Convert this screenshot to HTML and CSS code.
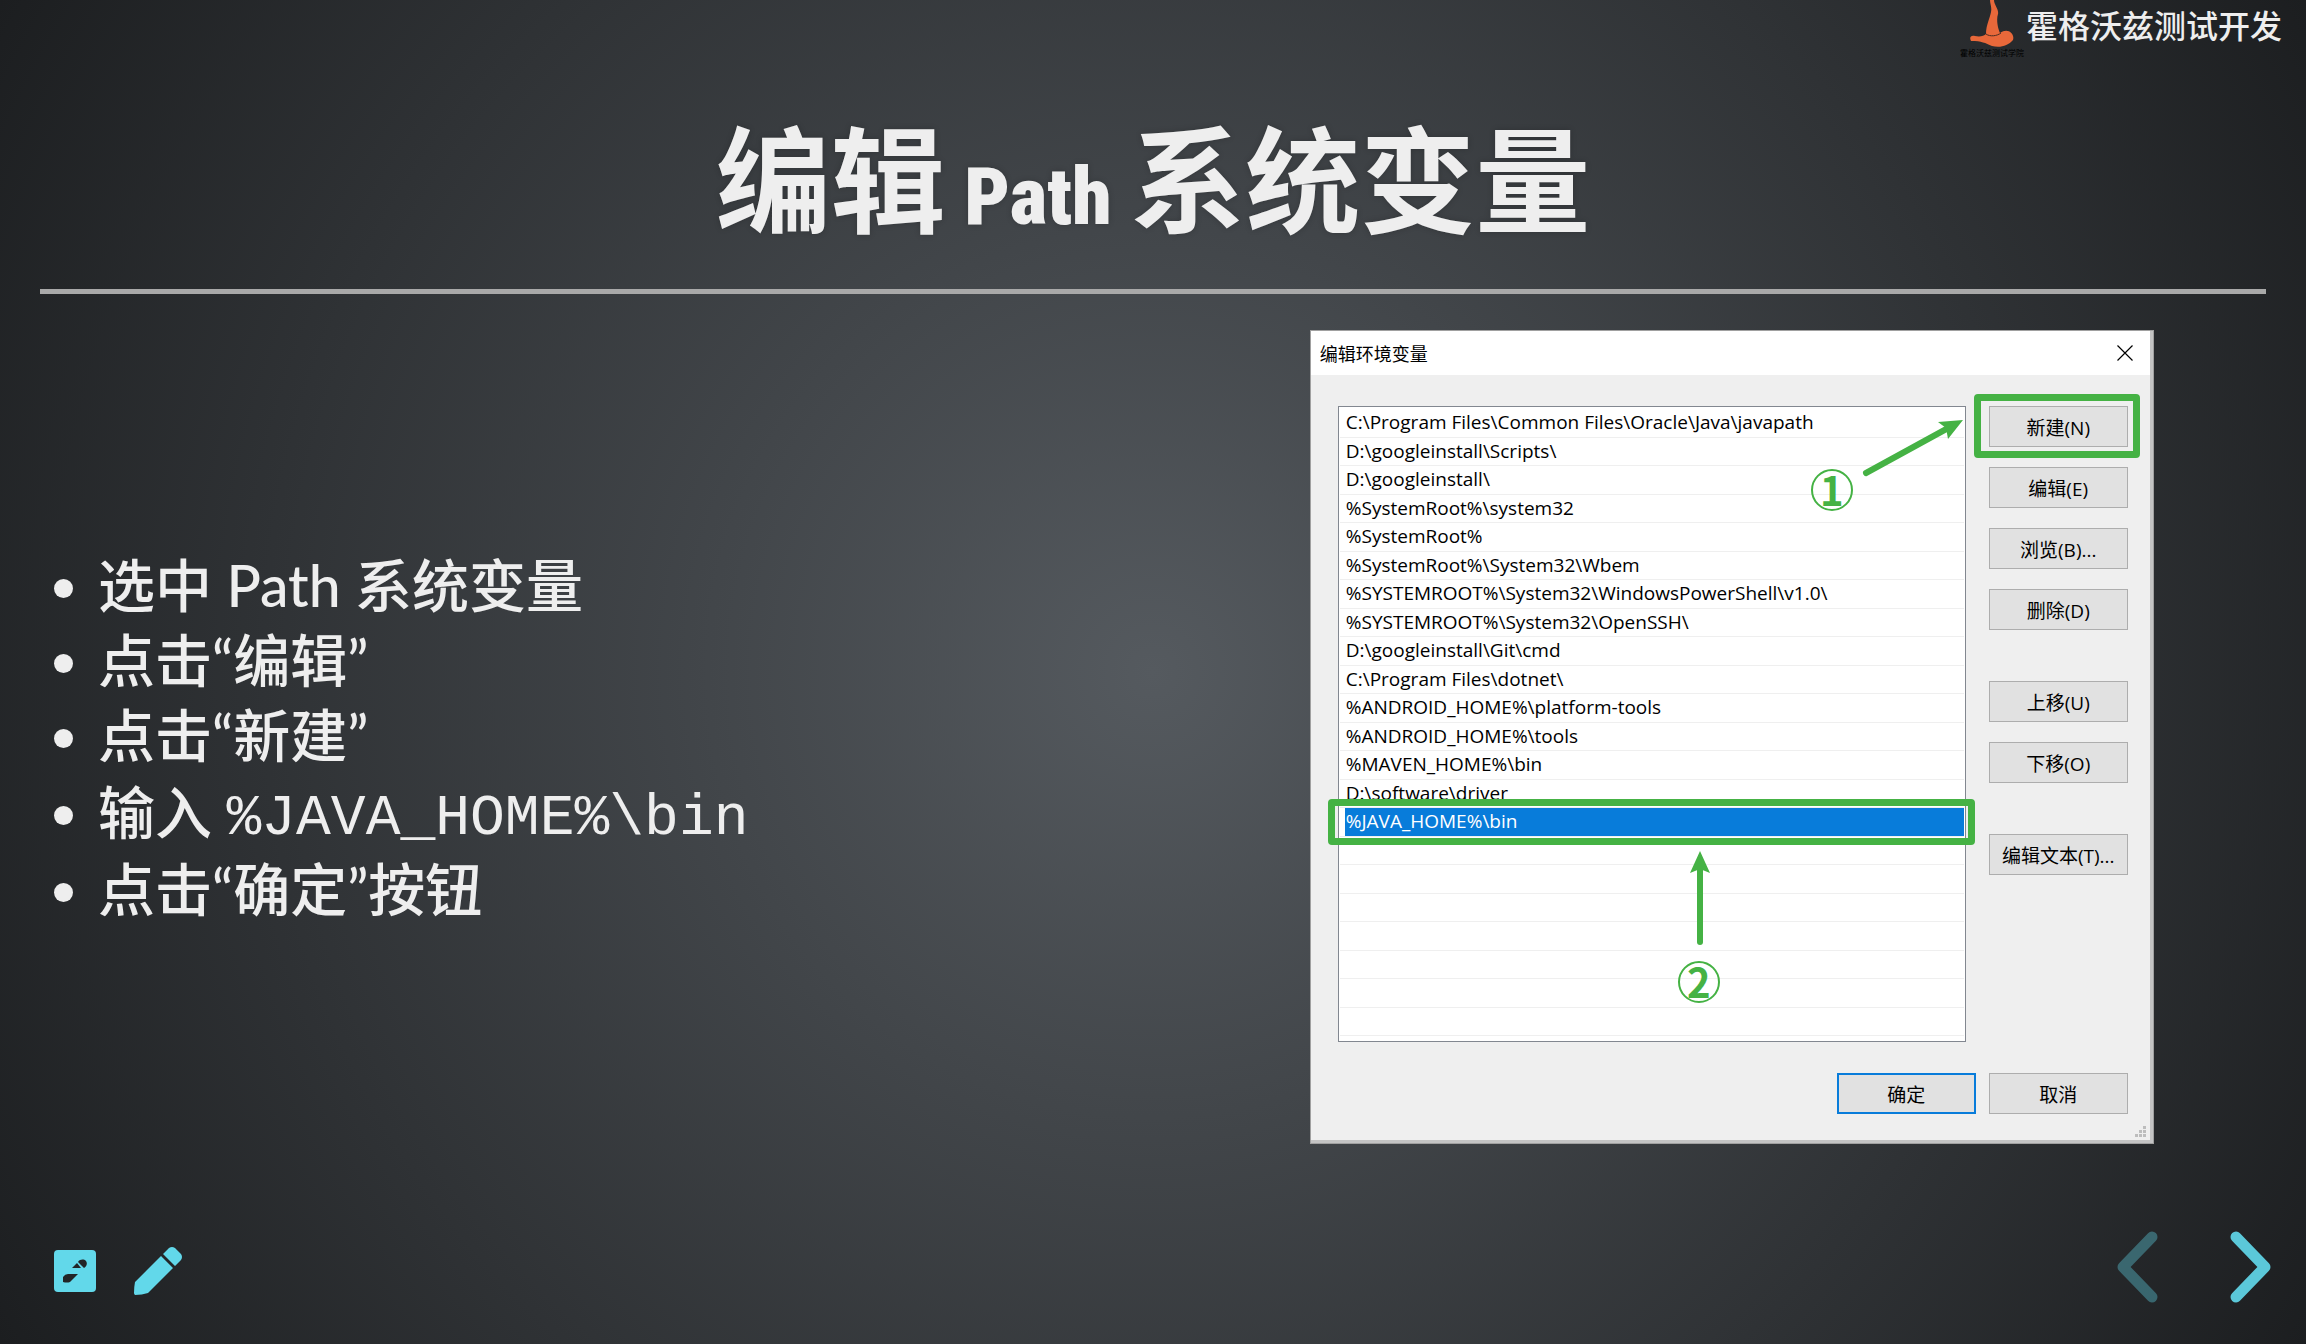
FILE: index.html
```html
<!DOCTYPE html>
<html lang="zh-CN">
<head>
<meta charset="utf-8">
<title>编辑 Path 系统变量</title>
<meta name="viewport" content="width=device-width, initial-scale=1">
<link rel="stylesheet" href="styles.css">
</head>
<body>
<header class="brand">
  <div class="brand-logo">
    <svg class="brand-hat" viewBox="0 0 44 47" aria-hidden="true">
      <path fill="#e8683a" d="M20 0H24C24 5 29 9 28 14C26 20 28 29 30 33C38 27 45 34 43 40C38 46 30 48 22 46C15 43 12 41 1 41C-1 37 1 35 5 36C10 37 14 36 16 34C16 25 20 18 21 12C22 7 20 4 20 0Z"/>
      <path fill="none" stroke="#4a2c22" stroke-width="1" d="M16 34C20 37 27 36 31 33"/>
    </svg>
    <span class="brand-caption">霍格沃兹测试学院</span>
  </div>
  <span class="brand-name">霍格沃兹测试开发</span>
</header>

<main class="slide">
  <h1 class="slide-title">编辑<span class="slide-title-latin"> Path </span>系统变量</h1>
  <hr class="rule">
  <div class="columns">
    <ul class="steps">
      <li>选中 Path 系统变量</li>
      <li>点击“编辑”</li>
      <li>点击“新建”</li>
      <li class="step-code">输入 <code>%JAVA_HOME%\bin</code></li>
      <li>点击“确定”按钮</li>
    </ul>

    <section class="dialog" aria-labelledby="dialog-title">
      <div class="dialog-bar">
        <h2 class="dialog-title" id="dialog-title">编辑环境变量</h2>
        <button class="dialog-close" type="button" aria-label="关闭">
          <svg viewBox="0 0 16 16" aria-hidden="true"><path d="M0.5 0.5L15.5 15.5M15.5 0.5L0.5 15.5" fill="none" stroke="#000" stroke-width="1.2"/></svg>
        </button>
      </div>
      <div class="dialog-body">
        <ul class="paths">
          <li>C:\Program Files\Common Files\Oracle\Java\javapath</li>
          <li>D:\googleinstall\Scripts\</li>
          <li>D:\googleinstall\</li>
          <li>%SystemRoot%\system32</li>
          <li>%SystemRoot%</li>
          <li>%SystemRoot%\System32\Wbem</li>
          <li>%SYSTEMROOT%\System32\WindowsPowerShell\v1.0\</li>
          <li>%SYSTEMROOT%\System32\OpenSSH\</li>
          <li>D:\googleinstall\Git\cmd</li>
          <li>C:\Program Files\dotnet\</li>
          <li>%ANDROID_HOME%\platform-tools</li>
          <li>%ANDROID_HOME%\tools</li>
          <li>%MAVEN_HOME%\bin</li>
          <li>D:\software\driver</li>
          <li class="selected"><span>%JAVA_HOME%\bin</span></li>
          <li></li>
          <li></li>
          <li></li>
          <li></li>
          <li></li>
          <li></li>
          <li></li>
        </ul>
        <div class="actions">
          <div class="action-group">
            <button class="btn btn-marked" type="button">新建(N)</button>
            <button class="btn" type="button">编辑(E)</button>
            <button class="btn" type="button">浏览(B)...</button>
            <button class="btn" type="button">删除(D)</button>
          </div>
          <div class="action-group">
            <button class="btn" type="button">上移(U)</button>
            <button class="btn" type="button">下移(O)</button>
          </div>
          <div class="action-group">
            <button class="btn" type="button">编辑文本(T)...</button>
          </div>
        </div>
      </div>
      <div class="dialog-foot">
        <button class="btn btn-default" type="button">确定</button>
        <button class="btn" type="button">取消</button>
      </div>
      <svg class="grip" viewBox="0 0 12 12" aria-hidden="true"><path fill="#bdbdbd" d="M8 0h3v3h-3zM4 4h3v3h-3zM8 4h3v3h-3zM0 8h3v3h-3zM4 8h3v3h-3zM8 8h3v3h-3z"/></svg>
      <svg class="arrows" viewBox="0 0 844 814" aria-hidden="true">
        <g fill="#45b244" stroke="#45b244">
          <path d="M556 143L640 97" stroke-width="6" stroke-linecap="round"/>
          <path d="M653 90L628 92L636 98L638 109Z" stroke="none"/>
          <path d="M390 612V540" stroke-width="6" stroke-linecap="round"/>
          <path d="M390 521L380 543L390 539L400 543Z" stroke="none"/>
        </g>
      </svg>
      <span class="callout callout-one">1</span>
      <span class="callout callout-two">2</span>
    </section>
  </div>
</main>

<footer class="controls">
  <div class="tools">
    <button class="tool" type="button" aria-label="画板">
      <svg width="42" height="42" viewBox="0 0 42 42" aria-hidden="true">
        <rect width="42" height="42" rx="4" fill="#62d8ea"/>
        <path fill="#222426" d="M9 32V27Q11 24 14 24H24L16 32Q13 33 9 32ZM18 18L23 13L27 18ZM24 12C26 9 30 9 32 11C34 14 32 17 30 18Z"/>
      </svg>
    </button>
    <button class="tool" type="button" aria-label="画笔">
      <svg width="48" height="48" viewBox="0 0 48 48" aria-hidden="true">
        <path fill="#62d8ea" d="M27 9L39 21L14 46Q8 48 1 48Q0 47 0 46Q0 40 1 35ZM29 7L35 1Q38 -1 41 1L47 7Q49 10 47 13L41 19Z"/>
      </svg>
    </button>
  </div>
  <nav class="pager" aria-label="翻页">
    <button class="page-btn page-prev" type="button" aria-label="上一页">
      <svg width="41" height="72" viewBox="0 0 41 72" aria-hidden="true"><path d="M35 6L6 36L35 66"/></svg>
    </button>
    <button class="page-btn" type="button" aria-label="下一页">
      <svg width="41" height="72" viewBox="0 0 41 72" aria-hidden="true"><path d="M6 6L35 36L6 66"/></svg>
    </button>
  </nav>
</footer>
</body>
</html>
```
FILE: styles.css
```css
* {
  box-sizing: border-box;
}

body {
  position: relative;
  display: flex;
  flex-direction: column;
  min-height: 100vh;
  margin: 0;
  background: #1c1e20 radial-gradient(circle farthest-corner at center, #555a5f 0%, #1c1e20 100%);
  color: #eee;
  font-family: Lato, "Noto Sans CJK SC", sans-serif;
}

button {
  padding: 0;
  border: 0;
  background: none;
  color: inherit;
  font: inherit;
}

svg {
  display: block;
}

/* Brand mark, pinned over the slide's top right corner */
.brand {
  position: absolute;
  top: 0;
  right: 24px;
  display: flex;
  align-items: flex-start;
  gap: 2px;
}

.brand-logo {
  display: flex;
  flex-direction: column;
  align-items: center;
}

.brand-hat {
  width: 44px;
  height: 47px;
}

.brand-caption {
  color: #000;
  font-size: 8px;
  line-height: 12px;
}

.brand-name {
  font-size: 32px;
  font-weight: 500;
  line-height: 52px;
}

/* Slide */
.slide {
  padding: 110px 40px 0;
}

.slide-title {
  margin: 0;
  font-size: 115px;
  font-weight: 700;
  line-height: 150px;
  text-align: center;
  font-family: "Roboto Condensed", Roboto, "Noto Sans CJK SC", sans-serif;
  text-shadow: 0 0 6px rgba(0, 0, 0, 0.2);
}

.slide-title-latin {
  font-size: 80px;
  font-weight: 900;
  line-height: 1;
}

.rule {
  height: 5px;
  margin: 29px 0 36px;
  border: 0;
  background: #a9a9a9;
}

.columns {
  display: grid;
  grid-template-columns: 52% 48%;
  align-items: center;
}

.steps {
  margin: 0;
  padding-left: 58px;
  font-size: 57px;
  font-weight: 500;
  line-height: 75px;
}

.step-code {
  line-height: 79px;
}

.steps code {
  font-family: "Liberation Mono", monospace;
  font-size: 58px;
  font-weight: 400;
  line-height: 1;
}

/* Dialog window */
.dialog {
  position: relative;
  justify-self: center;
  width: 844px;
  max-width: 100%;
  padding: 1px 4px 26px 1px;
  background: #efefef;
  box-shadow: inset 0 0 0 1px #a0a0a0, inset -4px -4px 0 #c4c4c4;
  color: #000;
  font-family: "Open Sans", "Noto Sans CJK SC", sans-serif;
  font-size: 19px;
}

.dialog-bar {
  display: flex;
  align-items: center;
  justify-content: space-between;
  height: 44px;
  padding: 0 17px 0 9px;
  background: #fff;
}

.dialog-title {
  margin: 0;
  font-size: 18px;
  font-weight: 400;
}

.dialog-close svg {
  width: 16px;
  height: 16px;
}

.dialog-body {
  display: flex;
  gap: 23px;
  padding: 31px 22px 0 27px;
}

.paths {
  display: flex;
  flex: 1;
  flex-direction: column;
  height: 636px;
  margin: 0;
  padding: 2px 1px 5px;
  border: 1px solid #828790;
  background: #fff;
  list-style: none;
}

.paths li {
  position: relative;
  flex: 1;
  padding-left: 6px;
  border-bottom: 1px solid #efefef;
  line-height: 27px;
}

.paths .selected {
  padding-left: 5px;
}

.selected span {
  display: block;
  height: 100%;
  padding-left: 1px;
  background: #087cda;
  color: #fff;
}

.selected::after,
.btn-marked::after {
  content: "";
  position: absolute;
  border: 7px solid #45b244;
  border-radius: 4px;
}

.selected::after {
  inset: -9px -11px -9px -12px;
}

.btn-marked::after {
  inset: -13px -13px -12px -16px;
}

.actions {
  display: flex;
  flex-direction: column;
  gap: 51px;
}

.action-group {
  display: flex;
  flex-direction: column;
  gap: 20px;
}

.btn {
  position: relative;
  width: 139px;
  height: 41px;
  border: 1px solid #adadad;
  background: #e1e1e1;
}

.btn-default {
  border: 2px solid #087cda;
}

.dialog-foot {
  display: flex;
  justify-content: flex-end;
  gap: 13px;
  padding: 31px 22px 4px;
}

.grip {
  position: absolute;
  right: 7px;
  bottom: 6px;
  width: 12px;
  height: 12px;
}

/* Tutorial marks drawn over the dialog */
.arrows {
  position: absolute;
  top: 0;
  left: 0;
  width: 844px;
  height: 814px;
}

.callout {
  position: absolute;
  width: 42px;
  height: 42px;
  border: 2px solid #45b244;
  border-radius: 50%;
  color: #45b244;
  font-family: "Noto Sans CJK SC", sans-serif;
  font-size: 40px;
  font-weight: 700;
  line-height: 36px;
  text-align: center;
}

.callout-one {
  top: 139px;
  left: 501px;
}

.callout-two {
  top: 631px;
  left: 368px;
}

/* Bottom controls */
.controls {
  display: flex;
  align-items: center;
  justify-content: space-between;
  margin-top: auto;
  padding: 0 35px 41px 54px;
}

.tools {
  display: flex;
  align-items: center;
  gap: 38px;
  padding-top: 8px;
}

.pager {
  display: flex;
  gap: 72px;
}

.page-btn path {
  fill: none;
  stroke: #5bc8d9;
  stroke-width: 11;
  stroke-linecap: round;
  stroke-linejoin: round;
}

.page-prev {
  opacity: 0.4;
}
```
